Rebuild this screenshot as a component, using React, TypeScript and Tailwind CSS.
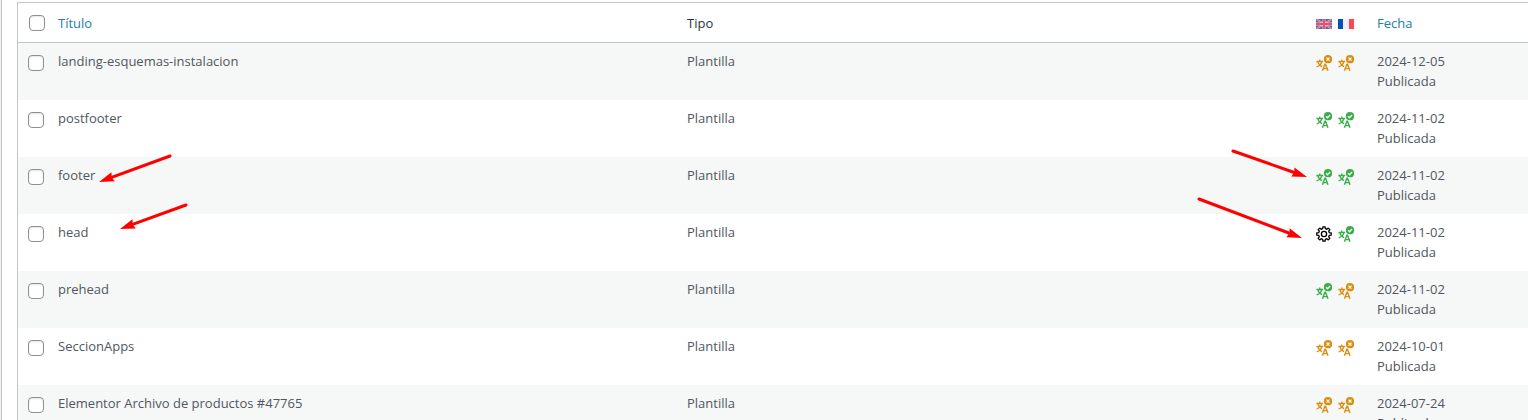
import React from "react";

type Status = "done" | "missing" | "working";

type Template = {
  title: string;
  en: Status;
  fr: Status;
  date: string;
};

const templates: Template[] = [
  { title: "landing-esquemas-instalacion", en: "missing", fr: "missing", date: "2024-12-05" },
  { title: "postfooter", en: "done", fr: "done", date: "2024-11-02" },
  { title: "footer", en: "done", fr: "done", date: "2024-11-02" },
  { title: "head", en: "working", fr: "done", date: "2024-11-02" },
  { title: "prehead", en: "done", fr: "missing", date: "2024-11-02" },
  { title: "SeccionApps", en: "missing", fr: "missing", date: "2024-10-01" },
  { title: "Elementor Archivo de productos #47765", en: "missing", fr: "missing", date: "2024-07-24" },
];

function gearOutline() {
  const corners: string[] = [];
  for (let tooth = 0; tooth < 8; tooth++) {
    const points = [
      [-14, 5.5],
      [-9, 7.3],
      [9, 7.3],
      [14, 5.5],
    ];
    for (const [offset, radius] of points) {
      const a = ((tooth * 45 + offset) * Math.PI) / 180;
      corners.push(`${(8 + radius * Math.cos(a)).toFixed(2)} ${(8 + radius * Math.sin(a)).toFixed(2)}`);
    }
  }
  return `M${corners.join("L")}Z`;
}

function StatusIcon({ status }: { status: Status }) {
  if (status === "working") {
    return (
      <svg viewBox="0 0 16 16" className="block size-4 text-black" fill="none" stroke="currentColor" strokeWidth="1.3">
        <path d={gearOutline()} strokeLinejoin="round" />
        <circle cx="8" cy="8" r="2.6" />
      </svg>
    );
  }
  const done = status === "done";
  return (
    <svg
      viewBox="0 0 16 16"
      className={done ? "block size-4 text-[#38ad48]" : "block size-4 text-[#d98e12]"}
      fill="none"
      stroke="currentColor"
      strokeWidth="1.3"
    >
      <path d="M.4 6.5h6.8M3.8 4.6v1.9M1.8 6.7c.6 2.4 2.3 4.2 4.2 5M5.8 6.7C5.3 9.1 3.4 11 .6 12" />
      <path d="M6.4 15.7 8.9 9.3h.6l2.5 6.4M7.4 13.6h3.6" strokeWidth="1.4" />
      <circle cx="12" cy="4.2" r="4.1" fill="currentColor" stroke="none" />
      {done ? (
        <path d="m10 4.2 1.5 1.5 2.6-2.7" stroke="white" />
      ) : (
        <path d="m10.5 2.7 3 3m0-3-3 3" stroke="white" strokeWidth="1.2" />
      )}
    </svg>
  );
}

function FlagUK() {
  return (
    <svg viewBox="0 0 16 10" className="block h-2.5 w-4" role="img" aria-label="Inglés">
      <path fill="#4462b0" d="M0 0h16v10H0z" />
      <path stroke="#c9c3dc" strokeWidth="1.8" d="m0 0 16 10M16 0 0 10" />
      <path stroke="#ee6076" strokeWidth="1" d="m0 0 16 10M16 0 0 10" />
      <path stroke="#e3d5e3" strokeWidth="3" d="M8 0v10M0 5h16" />
      <path stroke="#fa4a5c" strokeWidth="2" d="M8 0v10M0 5h16" />
    </svg>
  );
}

function FlagFR() {
  return (
    <svg viewBox="0 0 16 10" className="block h-2.5 w-4" role="img" aria-label="Francés">
      <path fill="#0a4fb3" d="M0 0h5v10H0z" />
      <path fill="#f1eff1" d="M5 0h6v10H5z" />
      <path fill="#ff4553" d="M11 0h5v10h-5z" />
    </svg>
  );
}

function Check({ label }: { label: string }) {
  return (
    <input
      type="checkbox"
      aria-label={label}
      className="block size-4 appearance-none rounded-sm border border-[#8c8f94] bg-white shadow-[inset_0_1px_2px_rgba(0,0,0,0.1)] checked:bg-[#2271b1]"
    />
  );
}

function Arrow({ x1, y1, x2, y2 }: { x1: number; y1: number; x2: number; y2: number }) {
  const angle = (Math.atan2(y2 - y1, x2 - x1) * 180) / Math.PI;
  const length = Math.hypot(x2 - x1, y2 - y1);
  return (
    <g transform={`translate(${x2} ${y2}) rotate(${angle})`}>
      <path d={`M${-length} 0H-12`} stroke="#ff0000" strokeWidth="3" strokeLinecap="round" />
      <path d="M0 0-15-4.8-13.5 0-15 4.8z" fill="#ff0000" />
    </g>
  );
}

export default function App() {
  return (
    <main className="relative flex h-screen overflow-hidden bg-white font-['Open_Sans','Noto_Sans',sans-serif] text-[13px] leading-5 text-[#50575e]">
      <div className="w-0.5 shrink-0 border-r border-[#c3c4c7] bg-[#f0f0f1]" />
      <div className="min-w-0 flex-1 pt-0.5 pl-[15px]">
        <table className="w-full table-fixed border-separate border-spacing-0 border-t border-l border-[#c3c4c7]">
          <colgroup>
            <col className="w-10" />
            <col />
            <col />
            <col className="w-[61px]" />
            <col className="w-[151px]" />
          </colgroup>
          <thead>
            <tr className="h-10 text-left align-middle">
              <th className="border-b border-[#c3c4c7] p-0 pl-[11px]">
                <Check label="Seleccionar todo" />
              </th>
              <th className="border-b border-[#c3c4c7] p-0 font-normal">
                <a href="#titulo" className="text-[#217fa8]">Título</a>
              </th>
              <th className="border-b border-[#c3c4c7] p-0 font-normal text-[#2c3338]">Tipo</th>
              <th className="border-b border-[#c3c4c7] p-0 pt-0.5">
                <div className="flex gap-1.5">
                  <FlagUK />
                  <FlagFR />
                </div>
              </th>
              <th className="border-b border-[#c3c4c7] p-0 font-normal">
                <a href="#fecha" className="text-[#217fa8]">Fecha</a>
              </th>
            </tr>
          </thead>
          <tbody>
            {templates.map((t) => (
              <tr key={t.title} className="h-[57px] align-top odd:bg-[#f6f7f7]">
                <td className="pt-3 pl-2.5">
                  <Check label={`Seleccionar ${t.title}`} />
                </td>
                <td className="pt-2">{t.title}</td>
                <td className="pt-2">Plantilla</td>
                <td className="pt-3">
                  <div className="flex gap-1.5">
                    <StatusIcon status={t.en} />
                    <StatusIcon status={t.fr} />
                  </div>
                </td>
                <td className="pt-2">
                  {t.date}
                  <br />
                  Publicada
                </td>
              </tr>
            ))}
          </tbody>
        </table>
      </div>
      <svg viewBox="0 0 100 90" className="pointer-events-none absolute top-[150px] left-[95px] h-[90px] w-[100px]" aria-hidden="true">
        <Arrow x1={75} y1={6} x2={4} y2={32} />
        <Arrow x1={91} y1={55} x2={25} y2={79} />
      </svg>
      <svg viewBox="0 0 120 100" className="pointer-events-none absolute top-[145px] right-[218px] h-[100px] w-[120px]" aria-hidden="true">
        <Arrow x1={43} y1={6} x2={117} y2={32} />
        <Arrow x1={9} y1={54} x2={112} y2={93} />
      </svg>
    </main>
  );
}
